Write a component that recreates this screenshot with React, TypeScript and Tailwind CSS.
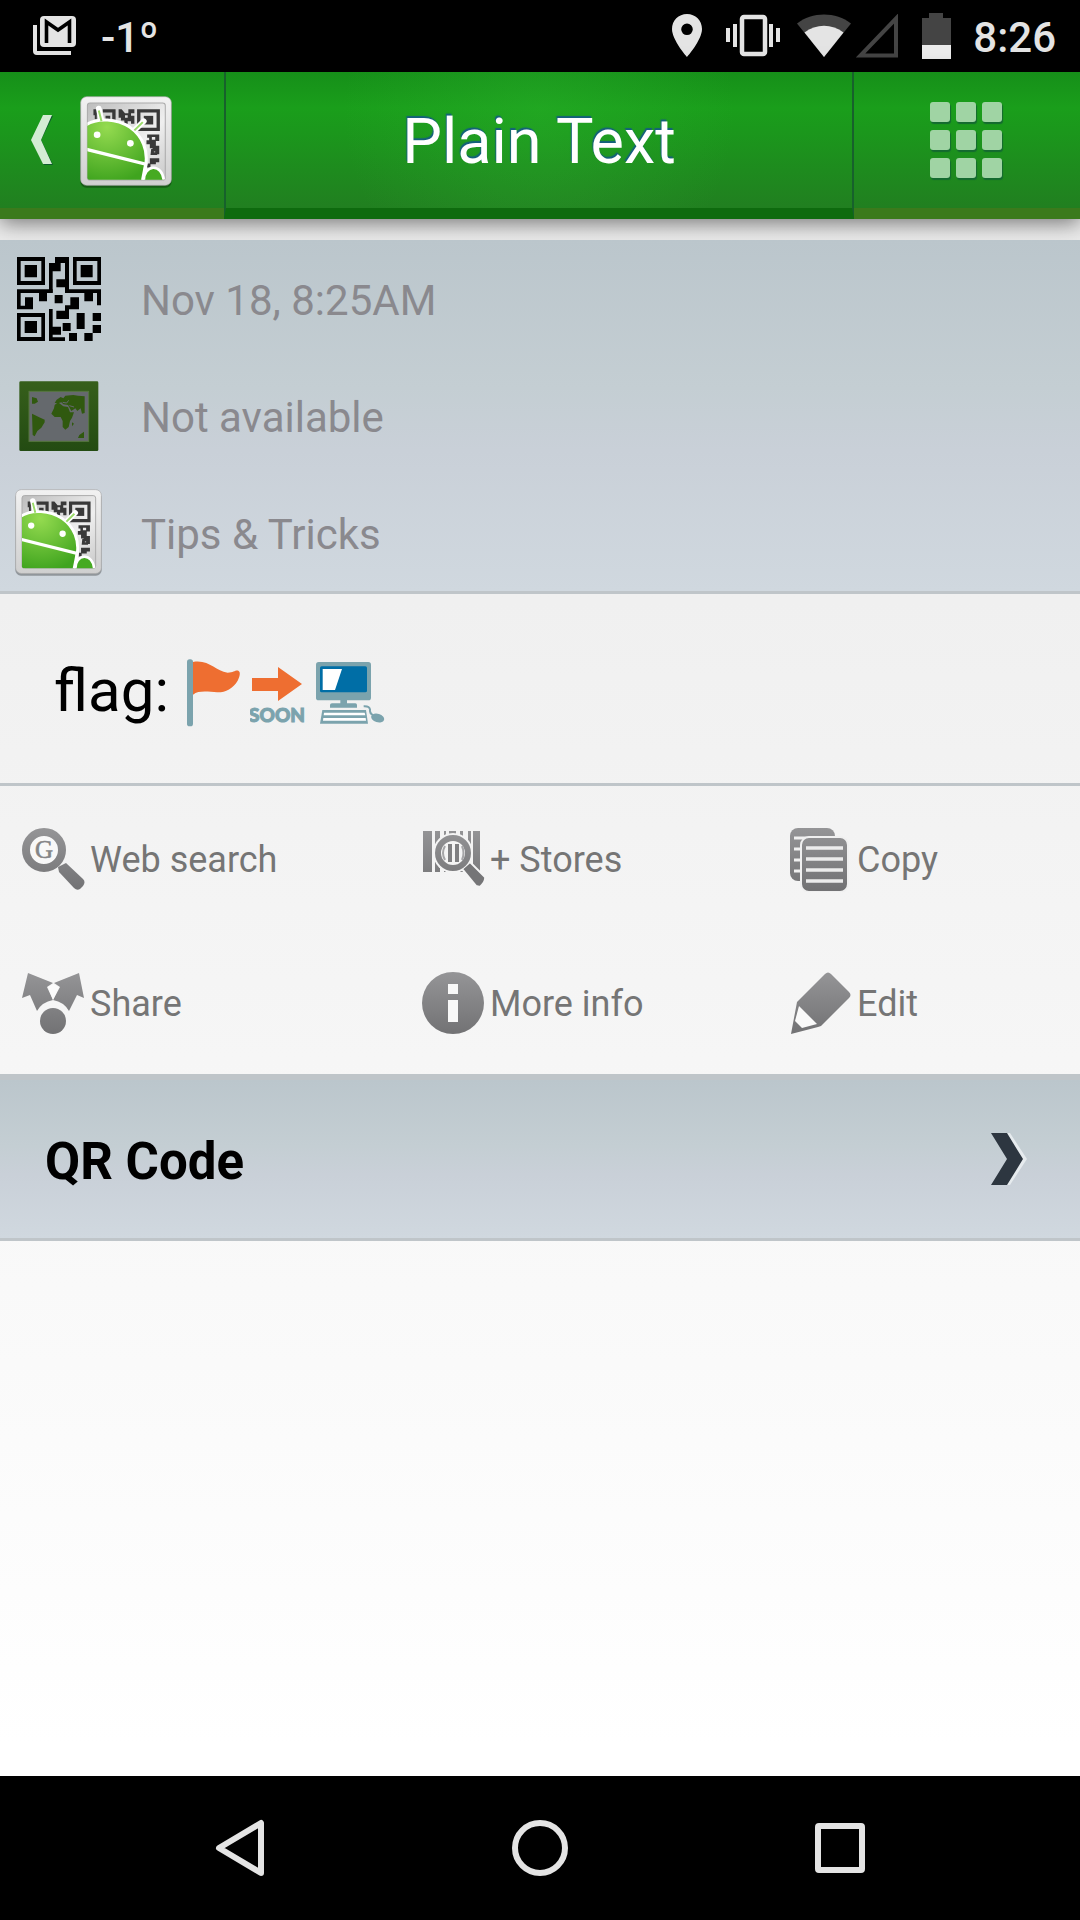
import React from "react";

function GmailIcon() {
  return (
    <svg width="44" height="40" viewBox="0 0 44 40" aria-label="New mail">
      <path d="M2 9V35Q2 37 4 37H38" fill="none" stroke="#e4e4e4" strokeWidth="4" />
      <rect x="7" y="0" width="36" height="31" rx="4" fill="#e4e4e4" />
      <path d="M13.500 27V6L25 14L36.500 6V27" fill="none" stroke="#000" strokeWidth="3.600" />
    </svg>
  );
}

function StatusIcons() {
  return (
    <>
      <svg width="30" height="44" viewBox="0 0 30 44" aria-label="Location">
        <path
          d="M15 0C6.500 0 0 6.500 0 15C0 26 15 43 15 43S30 26 30 15C30 6.500 23.500 0 15 0ZM15 9.500A5.800 5.800 0 1 1 15 21.100A5.800 5.800 0 1 1 15 9.500Z"
          fill="#e4e4e4"
          fillRule="evenodd"
        />
      </svg>
      <svg className="ml-6" width="54" height="44" viewBox="0 0 54 44" aria-label="Vibrate">
        <g fill="#e4e4e4">
          <rect x="0" y="14" width="4" height="14" />
          <rect x="7" y="10" width="4" height="23" />
          <rect x="43" y="10" width="4" height="23" />
          <rect x="50" y="14" width="4" height="14" />
        </g>
        <rect x="16" y="3" width="23" height="37" rx="2" fill="none" stroke="#e4e4e4" strokeWidth="4.500" />
      </svg>
      <svg className="ml-4" width="56" height="44" viewBox="0 0 56 44" aria-label="Wi-Fi">
        <path d="M28 43L1 9.500C16-2.500 40-2.500 55 9.500Z" fill="#444" />
        <path d="M28 43L8.500 18.500C20 9.500 36 9.500 47.500 18.500Z" fill="#e4e4e4" />
      </svg>
      <svg className="ml-1" width="42" height="44" viewBox="0 0 42 44" aria-label="No signal">
        <path d="M4.500 41.500H40V4.500Z" fill="none" stroke="#444" strokeWidth="4" />
      </svg>
      <svg className="ml-6" width="29" height="46" viewBox="0 0 29 46" aria-label="Battery">
        <path d="M0 5H7V0H21V5H29V46H0Z" fill="#444" />
        <rect y="32" width="29" height="14" fill="#ececec" />
      </svg>
    </>
  );
}

function AppLogo({ className }: { className: string }) {
  const id = React.useId();
  return (
    <svg className={className} viewBox="60 46 274 278" preserveAspectRatio="none" aria-hidden="true">
      <defs>
        <linearGradient id={id + "f"} x1="0" y1="0" x2="0" y2="1">
          <stop offset="0" stopColor="#f2f2f2" />
          <stop offset="1" stopColor="#cfcfcf" />
        </linearGradient>
        <linearGradient id={id + "p"} x1="0" y1="0" x2="1" y2="1">
          <stop offset="0" stopColor="#bdbdbd" />
          <stop offset="0.600" stopColor="#efefef" />
          <stop offset="1" stopColor="#c9c9c9" />
        </linearGradient>
        <radialGradient id={id + "g"} gradientUnits="userSpaceOnUse" cx="140" cy="140" r="170">
          <stop offset="0" stopColor="#95db50" />
          <stop offset="1" stopColor="#3fa41e" />
        </radialGradient>
        <clipPath id={id + "c"}>
          <rect x="82" y="68" width="232" height="231" rx="6" />
        </clipPath>
      </defs>
      <rect x="61" y="56" width="272" height="267" rx="18" fill="#000" opacity="0.300" />
      <rect x="62" y="48" width="270" height="268" rx="18" fill={`url(#${id}f)`} stroke="#a9a9a9" strokeWidth="2" />
      <rect x="82" y="67" width="232" height="233" rx="8" fill={`url(#${id}p)`} stroke="#aaa" strokeWidth="3" />
      <g fill="#393939">
        <path d="M230 86H298V152H230ZM240 96V142H288V96Z" fillRule="evenodd" />
        <rect x="250" y="106" width="28" height="26" />
        <path d="M128 86H166V126H156V96H128ZM136 106H150V122H136ZM100 86H110V116H104V104H100Z" />
        <path d="M175 86H184L194 98H204V86H222V98H212V106H222V130H212V122H202V130H192V120H182V112H175ZM194 104V112H202V104Z" fillRule="evenodd" />
        <path d="M260 162H296V182H286V196H296V222H284V214H276V204H268V192H258V180H266V172H260ZM274 170V178H284V170Z" fillRule="evenodd" />
        <path d="M272 206H280V216H290V224H270ZM268 234H296V246H286V252H270V262H260V250H268Z" />
      </g>
      <g clipPath={`url(#${id}c)`}>
        <path d="M116 84L125 124M250 122L218 154" stroke="#fff" strokeWidth="17" strokeLinecap="round" />
        <path
          d="M74 136C112 108 172 116 208 140C248 168 262 212 256 252L250 304H74Z"
          fill={`url(#${id}g)`}
          stroke="#fff"
          strokeWidth="9"
        />
        <path d="M116 90L124 122M247 125L222 150" stroke="#9bdc6a" strokeWidth="6" />
        <path d="M74 206L256 252L246 304" fill="none" stroke="#fff" strokeWidth="10" />
        <path d="M250 304C248 252 306 246 310 304Z" fill="#46aa22" stroke="#fff" strokeWidth="8" />
      </g>
      <circle cx="111" cy="163" r="10" fill="#fff" />
      <circle cx="210" cy="189" r="10" fill="#fff" />
    </svg>
  );
}

function QrIcon() {
  return (
    <svg className="h-[84px] w-[84px]" viewBox="50 49 252 252" aria-hidden="true">
      <path
        fillRule="evenodd"
        d="M50 49h84v84h-84zM61 61v60h62v-60zM218 49h84v84h-84zM229 61v60h62v-60zM50 217h84v84h-84zM61 229v60h62v-60z"
      />
      <path d="M73 73h37v37h-37zM241 73h36v37h-36zM73 241h37v36h-37z" />
      <path d="M164 49h42v18h-42zM146 67h35v25h-35zM146 67h11v89h-11zM194 49h12v107h-12zM168 116h30v24h-30z" />
      <path d="M50 146h107v11h-107zM194 146h108v11h-108zM50 146h11v60h-11zM74 170h24v36h-24zM50 195h48v11h-48zM116 156h24v26h-24zM163 163h24v25h-24zM210 170h26v36h-26zM194 194h30v12h-30zM194 196h12v20h-12zM168 210h38v25h-38zM252 156h26v26h-26zM290 146h12v48h-12z" />
      <path d="M146 205h11v96h-11zM150 258h32v24h-32zM146 290h48v11h-48zM187 247h24v24h-24zM206 277h24v24h-24zM229 217h24v48h-24zM252 277h25v24h-25zM277 217h25v24h-25zM277 253h25v24h-25z" />
    </svg>
  );
}

function MapIcon() {
  return (
    <svg className="h-[70px] w-[80px]" viewBox="57 422 240 210" aria-hidden="true">
      <defs>
        <linearGradient id="map-frame" x1="0" y1="0" x2="0" y2="1">
          <stop offset="0" stopColor="#365f1b" />
          <stop offset="1" stopColor="#234b12" />
        </linearGradient>
      </defs>
      <rect x="58" y="423" width="237" height="209" rx="4" fill="url(#map-frame)" />
      <rect x="87" y="453" width="179" height="150" fill="#65696d" stroke="#57773f" strokeWidth="3" />
      <g fill="#30590f">
        <path d="M96 470L110 474L114 484L104 490H96Z" />
        <path d="M96 520L104 524L116 530L134 538V546L124 562L112 572L104 588L98 584Z" />
        <path d="M162 504L164 494L174 486L190 498L204 500L210 516H222L216 532L210 542L206 560L196 568L188 560V542L182 530H164L154 520Z" />
        <path d="M164 488L170 478L182 470L190 474L196 466L220 464L234 466L254 468V518L246 520L242 504L232 512L226 504L214 512L204 494L190 492L184 486L176 488Z" />
        <path d="M216 546L222 550L216 558ZM252 574V593H234L238 584Z" />
      </g>
      <path d="M188 486L200 488L206 480M208 496L222 500" stroke="#65696d" strokeWidth="3" fill="none" />
    </svg>
  );
}

function FlagEmoji() {
  return (
    <svg className="h-[68px] w-[54px]" viewBox="558 203 162 204" role="img" aria-label="flag">
      <rect x="558" y="204" width="18" height="201" rx="8" fill="#7ba3ad" />
      <path
        d="M576 212C626 204 642 240 680 244C698 244 702 236 712 238C720 242 716 256 710 268C696 292 672 304 648 303C624 302 594 296 576 310Z"
        fill="#ee6e31"
      />
    </svg>
  );
}

function SoonEmoji() {
  return (
    <svg className="h-[68px] w-[56px]" viewBox="0 0 56 68" role="img" aria-label="soon">
      <path d="M2 19H28V8L52 25L28 42V32H2Z" fill="#ee6e31" />
      <text
        x="27"
        y="63"
        textAnchor="middle"
        fontSize="19"
        fontWeight="900"
        fontFamily="Lato, sans-serif"
        fill="#7ba3ad"
        stroke="#7ba3ad"
        strokeWidth="1"
      >
        SOON
      </text>
    </svg>
  );
}

function ComputerEmoji() {
  return (
    <svg className="h-[68px] w-[70px]" viewBox="945 203 210 204" role="img" aria-label="computer">
      <g fill="#7ba3ad">
        <rect x="948" y="212" width="165" height="115" rx="8" />
        <path d="M1021 326H1041V336H1066Q1071 336 1071 341V349H990V341Q990 336 996 336H1021Z" />
        <path d="M967 356H1098L1104 397H960Z" />
        <ellipse cx="1133" cy="380" rx="20" ry="13" transform="rotate(18 1133 380)" />
      </g>
      <path d="M1091 345Q1108 344 1110 354Q1108 366 1120 372" fill="none" stroke="#7ba3ad" strokeWidth="6" />
      <rect x="960" y="225" width="141" height="78" rx="5" fill="#006ea6" />
      <path d="M968 233H1026L1005 296H968Z" fill="#fff" />
      <path d="M972 364H1094L1096 372H971ZM970 380H1097L1098 388H969Z" fill="#fff" />
    </svg>
  );
}

function GreyDefs() {
  return (
    <svg width="0" height="0" className="absolute" aria-hidden="true">
      <defs>
        <linearGradient id="grey" gradientUnits="userSpaceOnUse" x1="0" y1="0" x2="0" y2="64">
          <stop offset="0" stopColor="#969698" />
          <stop offset="1" stopColor="#727274" />
        </linearGradient>
      </defs>
    </svg>
  );
}

const actionIcons = {
  search: (
    <>
      <path d="M36 41L44 37L61 53Q64 56 61 60L58 63Q55 65 52 62L37 46Z" fill="url(#grey)" />
      <circle cx="22" cy="24" r="18" fill="#f8f8f8" stroke="url(#grey)" strokeWidth="8" />
      <text
        x="22"
        y="32"
        textAnchor="middle"
        fontSize="25"
        fontFamily="Liberation Serif, serif"
        fill="#858587"
        stroke="#858587"
        strokeWidth="0.600"
      >
        G
      </text>
    </>
  ),
  stores: (
    <>
      <path d="M1 5H10V46H1ZM13 5H18V46H13ZM22 5H24V46H22ZM27 5H34V46H27ZM38 5H41V46H38ZM46 5H49V46H46ZM51 5H58V46H51Z" fill="url(#grey)" />
      <circle cx="31" cy="27" r="20" fill="#f4f4f4" />
      <path d="M40 43L48 36L63 51Q64 55 58 61L54 60Z" fill="#757577" stroke="#f4f4f4" strokeWidth="2" />
      <circle cx="31" cy="27" r="15" fill="#f4f4f4" stroke="url(#grey)" strokeWidth="6" />
      <path d="M26 18H30V36H26ZM33 18H37V36H33Z" fill="#7f7f81" />
      <path d="M23 20Q19 27 23 34M40 20Q43 27 40 34" fill="none" stroke="#a5a5a7" strokeWidth="2" />
    </>
  ),
  copy: (
    <>
      <rect x="1" y="2" width="45" height="53" rx="8" fill="url(#grey)" />
      <path d="M5 12H43M5 23H15M5 34H15M5 45H15" stroke="#f0f0f0" strokeWidth="3" />
      <rect x="12" y="11" width="47" height="55" rx="8" fill="url(#grey)" stroke="#f0f0f0" strokeWidth="2" />
      <path d="M17 22H54M17 33H54M17 44H54M17 55H54" stroke="#ececec" strokeWidth="3.500" />
    </>
  ),
  share: (
    <>
      <path d="M6 3L31 13L25 17L31 30Q20 32 15 41L8 25L0 28Z" fill="url(#grey)" />
      <path d="M57 3L32 13L38 17L31 30Q42 32 47 41L55 25L62 28Z" fill="url(#grey)" />
      <path d="M26 17L31 14L37 17L31 30Z" fill="#fbfbfb" />
      <circle cx="31" cy="51" r="13" fill="url(#grey)" />
    </>
  ),
  info: (
    <>
      <circle cx="31" cy="33" r="31" fill="url(#grey)" />
      <path d="M26 14H36V24H26ZM26 30H36V52H26Z" fill="#f8f8f8" />
    </>
  ),
  edit: (
    <>
      <path d="M8 32L36 4Q39 1 42 4L60 22Q63 25 60 28L34 54Q32 57 29 57L2 64Z" fill="url(#grey)" />
      <path d="M10 36L28 54L13 58L6 51Z" fill="#fafafa" />
    </>
  ),
};

const actions: { icon: keyof typeof actionIcons; label: string }[] = [
  { icon: "search", label: "Web search" },
  { icon: "stores", label: "+ Stores" },
  { icon: "copy", label: "Copy" },
  { icon: "share", label: "Share" },
  { icon: "info", label: "More info" },
  { icon: "edit", label: "Edit" },
];

function InfoRow({ icon, text }: { icon: React.ReactNode; text: string }) {
  return (
    <li className="flex h-[117px] items-center">
      <span className="flex w-[117px] justify-center">{icon}</span>
      <span className="pt-1 pl-6 text-[42px] leading-[50px] text-[#8a898e]">{text}</span>
    </li>
  );
}

export default function App() {
  return (
    <div className="flex min-h-screen flex-col bg-white font-[Roboto,sans-serif]">
      <GreyDefs />
      <div className="flex h-[72px] items-center bg-black pr-6 pl-[33px] text-[42px] leading-[50px] font-medium text-[#e4e4e4]">
        <GmailIcon />
        <span className="ml-6 pt-1">-1º</span>
        <div className="ml-auto flex items-center">
          <StatusIcons />
          <span className="ml-[22px] pt-1">8:26</span>
        </div>
      </div>

      <header className="relative flex h-[147px] bg-[linear-gradient(#168f19_0,#1a9e1b_36px,#1b971c_60px,#217f20_136px)] shadow-[0_4px_20px_rgba(0,0,0,0.5)]">
        <button type="button" aria-label="Back" className="flex w-[224px] items-center border-b-[11px] border-[#3b7a1c] pl-[31px]">
          <svg width="22" height="50" viewBox="0 0 22 50" aria-hidden="true">
            <path d="M13 1H22L10 25L22 50H13L1 25Z" fill="#0e5c2c" />
            <path d="M12 0H21L10 25L21 49H12L0 25Z" fill="#d3ecd3" />
          </svg>
          <AppLogo className="mt-1 ml-[27px] h-[92px] w-[92px]" />
        </button>
        <h1 className="flex-1 border-x-2 border-b-[11px] border-x-[#17612c] border-b-[#0e6b0e] bg-[radial-gradient(circle_at_50%_30%,rgba(50,190,50,0.28),transparent_60%)] pt-8 text-center text-[63px] leading-[76px] text-white [text-shadow:-1px_-2px_1px_#14607c]">
          Plain Text
        </h1>
        <button type="button" aria-label="Menu" className="flex w-[226px] items-center justify-center border-b-[11px] border-[#3b7a1c] pr-[2px]">
          <span className="grid grid-cols-3 gap-x-[6px] gap-y-2">
            {Array.from({ length: 9 }, (_, i) => (
              <span key={i} className="h-5 w-5 rounded-[3px] bg-[#a0d4a4] shadow-[1px_2px_1px_#146a30]" />
            ))}
          </span>
        </button>
      </header>

      <main className="flex flex-1 flex-col bg-[linear-gradient(#ebebeb,#ffffff_98%)] pt-[21px]">
        <ul className="relative border-b-[3px] border-[#bfc5c9] bg-[linear-gradient(#bbc6cc,#c4ced3_42%,#c9d0d8_60%,#d0d8df)]">
          <InfoRow icon={<QrIcon />} text="Nov 18, 8:25AM" />
          <InfoRow icon={<MapIcon />} text="Not available" />
          <InfoRow icon={<AppLogo className="h-[87px] w-[87px]" />} text="Tips & Tricks" />
        </ul>

        <section className="flex h-[192px] items-center border-b-[3px] border-[#bfc5c9] pt-1 pl-[54px] text-[60px] leading-[70px] text-black">
          <span>flag:</span>
          <span className="ml-[18px] flex gap-[9px] pt-1">
            <FlagEmoji />
            <SoonEmoji />
            <ComputerEmoji />
          </span>
        </section>

        <section className="grid grid-cols-[400fr_367fr_313fr]">
          {actions.map(({ icon, label }) => (
            <button
              key={icon}
              type="button"
              className="flex h-36 items-center gap-1 pt-[2px] pl-[22px] text-left text-[36px] leading-[42px] text-[#757575]"
            >
              <svg className="h-[66px] w-[64px]" viewBox="0 0 64 66" aria-hidden="true">
                {actionIcons[icon]}
              </svg>
              <span className="pt-[2px]">{label}</span>
            </button>
          ))}
        </section>

        <button
          type="button"
          className="flex h-[167px] items-center justify-between border-t-[6px] border-b-[3px] border-[#bfc5c9] bg-[linear-gradient(#bbc6cc,#c4ced3_42%,#c9d0d8_60%,#d0d8df)] pr-[53px] pl-[45px] text-left text-[51px] leading-[60px] font-bold text-black"
        >
          <span className="pt-[6px]">QR Code</span>
          <svg width="36" height="52" viewBox="0 0 36 52" aria-hidden="true">
            <path d="M4 0H19L36 26L19 52H4L20 26Z" fill="#e6ebee" />
            <path d="M0 0H16L32 26L16 52H0L16 26Z" fill="#2d3640" />
          </svg>
        </button>
      </main>

      <nav className="grid h-36 grid-cols-3 bg-black px-[90px]">
        <button type="button" aria-label="Back" className="flex items-center justify-center">
          <svg width="50" height="58" viewBox="0 0 50 58" fill="none" stroke="#e4e4e4" strokeWidth="6" strokeLinejoin="round">
            <path d="M46 4V54L4 29Z" />
          </svg>
        </button>
        <button type="button" aria-label="Home" className="flex items-center justify-center">
          <svg width="56" height="56" viewBox="0 0 56 56" fill="none" stroke="#e4e4e4" strokeWidth="6">
            <circle cx="28" cy="28" r="25" />
          </svg>
        </button>
        <button type="button" aria-label="Recent apps" className="flex items-center justify-center">
          <svg width="50" height="50" viewBox="0 0 50 50" fill="none" stroke="#e4e4e4" strokeWidth="6">
            <rect x="3" y="3" width="44" height="44" rx="1" />
          </svg>
        </button>
      </nav>
    </div>
  );
}
